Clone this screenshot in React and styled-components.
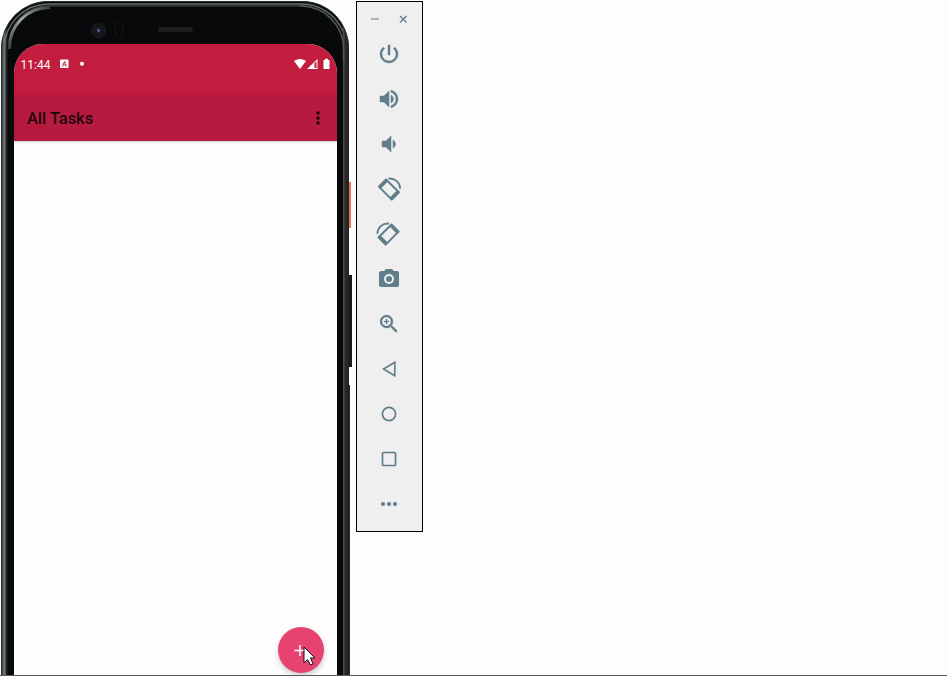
import React from "react";
import styled, { createGlobalStyle } from "styled-components";

const GlobalStyle = createGlobalStyle`
  * { box-sizing: border-box; }
  html, body { margin: 0; background: #fdfdfd; overflow: hidden; }
`;
const Page = styled.main`
  display: flex;
  align-items: flex-start;
  height: 676px;
  overflow: hidden;
  background: #fdfdfd;
  border-bottom: 1px solid #5c5a5c;
  font-family: Roboto, sans-serif;
`;
const Device = styled.section`
  position: relative;
  flex: none;
  width: 348px;
  height: 720px;
  margin: 1px 0 0 1px;
`;
const Frame = styled.div`
  position: relative;
  height: 100%;
  border-radius: 48px 47px 0 0;
  padding: 43px 12px 0 13px;
  background: linear-gradient(90deg, #252a2a 0, #303636 1px, #545b5b 2px, #747c7c 3px, #6a7272 4px, #282b2b 5px, #202323 6px, #08090a 7px, #08090a 341px, #484848 342px, #4c4c4c 343px, #292929 344px, #252525 347px, #1a1a1a 348px);
`;
const Bezel = styled.div`
  position: absolute;
  inset: 6px 6px 0 7px;
  border-radius: 41px 41px 0 0;
  background: #08090a;
  box-shadow: 0 -1px 0 #242727, 0 -2px 0 #333737;
`;
const FrameShine = styled.svg`
  position: absolute;
  left: 0;
  top: 0;
`;
const Lens = styled.i`
  position: absolute;
  left: 89.5px;
  top: 21.5px;
  width: 15px;
  height: 15px;
  border-radius: 50%;
  background: radial-gradient(circle, #52617e 0 1px, #171a22 2px 4px, #101113 5px, #18191b 6px 7px);
`;
const Sensor = styled.i`
  position: absolute;
  left: 114px;
  top: 20px;
  width: 8px;
  height: 17px;
  border: 1px solid #151617;
  border-radius: 4px;
`;
const Speaker = styled.i`
  position: absolute;
  left: 157px;
  top: 26px;
  width: 35px;
  height: 5px;
  border-radius: 3px;
  background: #1e1e1e;
`;
const SideButton = styled.i`
  position: absolute;
  z-index: 1;
  left: 348px;
  top: ${(p) => p.$top}px;
  width: ${(p) => p.$width}px;
  height: ${(p) => p.$height}px;
  background: ${(p) => p.$color};
`;
const Screen = styled.div`
  position: relative;
  height: 100%;
  border-radius: 29px 29px 0 0;
  background: #fdfdfd;
  overflow: hidden;
`;
const StatusBar = styled.header`
  display: flex;
  align-items: flex-start;
  height: 51px;
  padding: 14px 6px 0 6.5px;
  background: #c21d3e;
  color: #fff;
  font-size: 12px;
  line-height: 14px;
`;
const Clock = styled.span`width: 39px;`;
const StatusIcons = styled.svg`margin-left: auto;`;
const AppBar = styled.div`
  display: flex;
  align-items: center;
  justify-content: space-between;
  height: 46px;
  padding: 1px 15px 0 13px;
  background: #b61b3f;
  box-shadow: 0 1px 2px #0003;
`;
const Title = styled.h1`
  margin: 0;
  font-size: 16.4px;
  font-weight: 500;
  line-height: 20px;
  color: #23040b;
`;
const AddButton = styled.button`
  position: absolute;
  left: 263.5px;
  top: 583px;
  width: 46px;
  height: 46px;
  padding: 0;
  border: 0;
  border-radius: 50%;
  background: #e74370;
  box-shadow: 0 3px 4px #0002, 1px 2px 7px #00000014;
  display: grid;
  place-items: center;
`;
const Cursor = styled.svg`
  position: absolute;
  left: 289px;
  top: 602px;
`;
const Toolbar = styled.aside`
  flex: none;
  width: 67px;
  height: 531px;
  margin: 1px 0 0 7px;
  border: 1px solid #000;
  background: #efefef;
  display: flex;
  flex-direction: column;
  color: #607d8b;
`;
const WindowControls = styled.div`
  display: flex;
  justify-content: space-between;
  height: 29px;
  padding: 12px 14.5px 0 14px;
`;
const Tool = styled.button`
  height: 45px;
  padding: 0 1px 0 0;
  border: 0;
  background: none;
  color: inherit;
  display: grid;
  place-items: center;
  svg { display: block; overflow: visible; }
`;

const line = { fill: "none", stroke: "currentColor" };
const bold = { stroke: "currentColor", strokeWidth: 0.5 };
const rotate = (
  <>
    <path {...line} strokeWidth="2" strokeLinejoin="round" d="M1.900 9.600 9 2.500 21.900 15.300 14.800 22.600Z" />
    <path {...line} strokeWidth="3.400" d="M2.800 10.300 9.700 3.400M14 21.700l7-7" />
    <path {...line} strokeWidth="1.900" d="M11.500 1.600C18.200 1.100 22.900 5.500 23.200 11.800" />
  </>
);
const tools = [
  ["Power", <path {...bold} d="M13 3h-2v10h2V3zm4.83 2.17-1.42 1.42A6.92 6.92 0 0 1 19 12c0 3.87-3.13 7-7 7A6.995 6.995 0 0 1 7.58 6.58L6.17 5.17A8.932 8.932 0 0 0 3 12a9 9 0 0 0 18 0c0-2.74-1.23-5.18-3.17-6.83z" />],
  ["Volume up", <path {...bold} d="M3 9v6h4l5 5V4L7 9H3zm13.5 3A4.5 4.5 0 0 0 14 7.97v8.05c1.48-.73 2.5-2.25 2.5-4.02zM14 3.23v2.06c2.89.86 5 3.54 5 6.71s-2.11 5.85-5 6.71v2.06c4.01-.91 7-4.49 7-8.77s-2.99-7.86-7-8.77z" />],
  ["Volume down", <path {...bold} d="M18.5 12A4.5 4.5 0 0 0 16 7.97v8.05c1.48-.73 2.5-2.25 2.5-4.02zM5 9v6h4l5 5V4L9 9H5z" />],
  ["Rotate left", rotate],
  ["Rotate right", <g transform="matrix(-1 0 0 1 23.500 0)">{rotate}</g>],
  ["Screenshot", <><circle cx="12" cy="12" r="3" /><path d="M9 2 7.17 4H4c-1.100 0-2 .9-2 2v12c0 1.100.9 2 2 2h16c1.100 0 2-.9 2-2V6c0-1.100-.9-2-2-2h-3.170L15 2H9zm3 15a5 5 0 1 1 0-10 5 5 0 0 1 0 10z" /></>],
  ["Zoom", <path {...bold} strokeWidth=".3" d="M15.500 14h-.79l-.28-.27A6.471 6.471 0 0 0 16 9.500 6.500 6.500 0 1 0 9.500 16c1.610 0 3.090-.59 4.230-1.570l.27.28v.79l5 4.990L20.490 19l-4.990-5zm-6 0a4.500 4.500 0 1 1 0-9 4.500 4.500 0 0 1 0 9zm2.500-4h-2v2H9v-2H7V9h2V7h1v2h2v1z" />],
  ["Back", <path {...line} strokeWidth="1.600" d="M17.800 5.200v13.600L6.500 12Z" />],
  ["Home", <circle {...line} strokeWidth="1.700" cx="12" cy="12" r="6.600" />],
  ["Overview", <rect {...line} strokeWidth="1.700" x="5.500" y="5.500" width="13" height="13" rx=".8" />],
  ["More", <><circle cx="6" cy="12" r="2.100" /><circle cx="12" cy="12" r="2.100" /><circle cx="18" cy="12" r="2.100" /></>],
];

export default function App() {
  return (
    <>
      <GlobalStyle />
      <Page>
        <Device>
          <SideButton $top={181} $height={46} $width={2} $color="#ef7458" />
          <SideButton $top={274} $height={92} $width={3} $color="#191a1b" />
          <SideButton $top={384} $height={336} $width={1} $color="#2a2a2a" />
          <Frame>
            <Bezel />
            <FrameShine width="348" height="60" fill="none">
              <defs>
                <linearGradient id="shine" x1="0" y1="1" x2="1" y2="0">
                  <stop offset="0" stopColor="#3c4141" />
                  <stop offset=".5" stopColor="#a4a9a9" />
                  <stop offset="1" stopColor="#3c4141" />
                </linearGradient>
              </defs>
              <path d="M.5 60V47A46.500 46.500 0 0 1 47 .5H301A46.500 46.500 0 0 1 347.500 47" stroke="#292d2d" />
              <path d="M3.500 60V47A44 44 0 0 1 47 3H301A44 44 0 0 1 341.500 30" stroke="#686e6e" strokeWidth="1.300" />
              <path d="M8.500 48A40 40 0 0 1 49 6.500" stroke="url(#shine)" strokeWidth="3" />
              <path d="M299 5A43 43 0 0 1 342.500 48V60" stroke="#515555" strokeWidth="1.500" />
            </FrameShine>
            <Lens />
            <Sensor />
            <Speaker />
            <Screen>
              <StatusBar>
                <Clock>11:44</Clock>
                <svg width="30" height="14">
                  <rect x="0" y="1.500" width="8.500" height="8.500" rx=".8" fill="#fff" />
                  <path d="m2.500 8.500 2-5 2 5M3.500 7h2" fill="none" stroke="#c21d3e" />
                  <circle cx="22" cy="5.800" r="2" fill="#fff" />
                </svg>
                <StatusIcons width="37" height="14" fill="#fff">
                  <path d="M0 3Q6-1 12 3L6 11Z" />
                  <path d="M13 11 23.500 1v10Z" />
                  <path d="M20.500 5v5h2V3.500Z" fill="#c21d3e" />
                  <path d="M29.500 2h1.500V.8h3V2h1.500v9h-6Z" />
                </StatusIcons>
              </StatusBar>
              <AppBar>
                <Title>All Tasks</Title>
                <svg width="8" height="17" fill="#160207">
                  <circle cx="4" cy="3" r="1.700" /><circle cx="4" cy="8" r="1.700" /><circle cx="4" cy="13" r="1.700" />
                </svg>
              </AppBar>
              <AddButton aria-label="Add task">
                <svg width="13" height="13" stroke="#fff" strokeWidth="1.500"><path d="M.5 6.500h11M6 1v11" /></svg>
              </AddButton>
              <Cursor width="14" height="20">
                <path d="M1 1v16l3.600-3.500L7.400 19l2.600-1.200L7.500 12H12Z" fill="#fff" stroke="#171020" />
              </Cursor>
            </Screen>
          </Frame>
        </Device>
        <Toolbar>
          <WindowControls>
            <svg width="8" height="9"><path d="M0 5h8" stroke="#9fb1b9" strokeWidth="1.800" /></svg>
            <svg width="9" height="9"><path d="m1 2 6.500 6.500m0-6.500L1 8.500" stroke="#607d8b" strokeWidth="1.300" /></svg>
          </WindowControls>
          {tools.map(([name, shape]) => (
            <Tool key={name} aria-label={name}>
              <svg width="24" height="24" viewBox="0 0 24 24" fill="currentColor">{shape}</svg>
            </Tool>
          ))}
        </Toolbar>
      </Page>
    </>
  );
}
